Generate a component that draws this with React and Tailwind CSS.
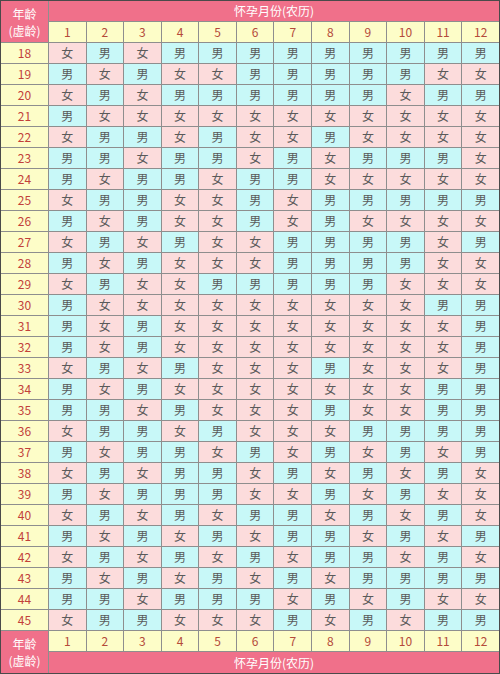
const data = {
  18: "女男女男男男男男男男男男",
  19: "男女男女女男男男男男女女",
  20: "女男女男男男男男男女男男",
  21: "男女女女女女女女女女女女",
  22: "女男男女男女女男女女女女",
  23: "男男女男男女男女男男男女",
  24: "男女男男女男男女女女女女",
  25: "女男男女女男女男男男男男",
  26: "男女男女女男女男女女女女",
  27: "女男女男女女男男男男女男",
  28: "男女男女女女男男男男女女",
  29: "女男女女男男男男男女女女",
  30: "男女女女女女女女女女男男",
  31: "男女男女女女女女女女女男",
  32: "男女男女女女女女女女女男",
  33: "女男女男女女女男女女女男",
  34: "男女男女女女女女女女男男",
  35: "男男女男女女女男女女男男",
  36: "女男男女男女女女男男男男",
  37: "男女男男女男女男女男女男",
  38: "女男女男男女男女男女男女",
  39: "男女男男男女女男女男女女",
  40: "女男女男女男男女男女男女",
  41: "男女男女男女男男女男女男",
  42: "女男女男女男女男男女男女",
  43: "男女男女男女男女男男男男",
  44: "男男女男男男女男女男女女",
  45: "女男男女女女男女男女男男",
};

const months = [1, 2, 3, 4, 5, 6, 7, 8, 9, 10, 11, 12];

const AgeLabel = () => (
  <div className="row-span-2 bg-[#f0708a] text-white flex flex-col items-center justify-center leading-[17px]">
    <span>年龄</span>
    <span>(虚龄)</span>
  </div>
);

const Title = () => (
  <div className="col-span-12 bg-[#f0708a] text-white flex items-center justify-center">
    怀孕月份(农历)
  </div>
);

const MonthCells = () =>
  months.map((m) => (
    <div key={m} className="bg-[#fdfdc8] text-[#b44a3a] flex items-center justify-center">
      {m}
    </div>
  ));

export default function App() {
  return (
    <div className="w-[500px] h-[674px] border border-[#4a4a4a] bg-white">
      <div
        className="grid grid-cols-[47px_repeat(12,1fr)] grid-rows-[repeat(31,20px)_21px] gap-px bg-[#8e8e8e] text-[12px] h-[672px]"
        style={{ fontFamily: '"Noto Sans CJK SC", "Noto Sans", sans-serif' }}
      >
        <AgeLabel />
        <Title />
        <MonthCells />

        {Object.keys(data).map((age) => (
          <div key={age} className="contents">
            <div className="bg-[#fdfdc8] text-[#c2403a] flex items-center justify-center">{age}</div>
            {data[age].split("").map((g, i) => (
              <div
                key={i}
                className={
                  "flex items-center justify-center text-[#5a5a5a] " +
                  (g === "男" ? "bg-[#c8f8f8]" : "bg-[#fcdcdc]")
                }
              >
                {g}
              </div>
            ))}
          </div>
        ))}

        <AgeLabel />
        <MonthCells />
        <Title />
      </div>
    </div>
  );
}
